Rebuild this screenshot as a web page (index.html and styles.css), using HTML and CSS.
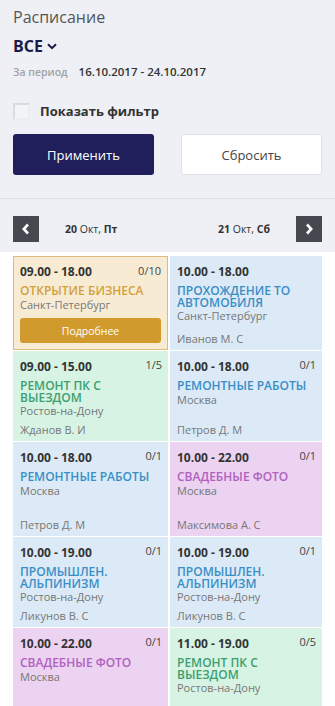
FILE: index.html
```html
<!DOCTYPE html>
<html lang="ru">
<head>
<meta charset="utf-8">
<link rel="stylesheet" href="styles.css">
</head>
<body>
<div class="top">
  <div class="title">Расписание</div>
  <div class="sel">ВСЕ
    <svg class="chev" width="10" height="7" viewBox="0 0 10 7"><path d="M1 1.2 L5 5.2 L9 1.2" fill="none" stroke="#1b1b4b" stroke-width="2"/></svg>
  </div>
  <div class="period"><span class="plabel">За период</span><span class="pval">16.10.2017 - 24.10.2017</span></div>
  <div class="check"><span class="box"></span><span class="clabel">Показать фильтр</span></div>
  <div class="btns">
    <button class="btn apply">Применить</button>
    <button class="btn reset">Сбросить</button>
  </div>
</div>
<div class="nav">
  <span class="arr"><svg width="10" height="12" viewBox="0 0 10 12"><path d="M7 1.5 L2.8 6 L7 10.5" fill="none" stroke="#fff" stroke-width="2.6"/></svg></span>
  <span class="day"><b>20</b> Окт, <b>Пт</b></span>
  <span class="day d2"><b>21</b> Окт, <b>Сб</b></span>
  <span class="arr"><svg width="10" height="12" viewBox="0 0 10 12"><path d="M3 1.5 L7.2 6 L3 10.5" fill="none" stroke="#fff" stroke-width="2.6"/></svg></span>
</div>
<div class="grid">
  <div class="card gold">
    <div class="time">09.00 - 18.00</div><span class="cnt">0/10</span>
    <div class="ttl">Открытие бизнеса</div>
    <div class="city">Санкт-Петербург</div>
    <div class="more">Подробнее</div>
  </div>
  <div class="card blue">
    <div class="time">10.00 - 18.00</div>
    <div class="ttl">Прохождение ТО автомобиля</div>
    <div class="city">Санкт-Петербург</div>
    <div class="who">Иванов М. С</div>
  </div>
  <div class="card green">
    <div class="time">09.00 - 15.00</div><span class="cnt">1/5</span>
    <div class="ttl">Ремонт ПК с<br>выездом</div>
    <div class="city">Ростов-на-Дону</div>
    <div class="who">Жданов В. И</div>
  </div>
  <div class="card blue">
    <div class="time">10.00 - 18.00</div><span class="cnt">0/1</span>
    <div class="ttl">Ремонтные работы</div>
    <div class="city">Москва</div>
    <div class="who">Петров Д. М</div>
  </div>
  <div class="card blue">
    <div class="time">10.00 - 18.00</div><span class="cnt">0/1</span>
    <div class="ttl">Ремонтные работы</div>
    <div class="city">Москва</div>
    <div class="who">Петров Д. М</div>
  </div>
  <div class="card pink">
    <div class="time">10.00 - 22.00</div><span class="cnt">0/1</span>
    <div class="ttl">Свадебные фото</div>
    <div class="city">Москва</div>
    <div class="who">Максимова А. С</div>
  </div>
  <div class="card blue">
    <div class="time">10.00 - 19.00</div><span class="cnt">0/1</span>
    <div class="ttl">Промышлен.<br>альпинизм</div>
    <div class="city">Ростов-на-Дону</div>
    <div class="who">Ликунов В. С</div>
  </div>
  <div class="card blue">
    <div class="time">10.00 - 19.00</div><span class="cnt">0/1</span>
    <div class="ttl">Промышлен.<br>альпинизм</div>
    <div class="city">Ростов-на-Дону</div>
    <div class="who">Ликунов В. С</div>
  </div>
  <div class="card pink">
    <div class="time">10.00 - 22.00</div><span class="cnt">0/1</span>
    <div class="ttl">Свадебные фото</div>
    <div class="city">Москва</div>
  </div>
  <div class="card green">
    <div class="time">11.00 - 19.00</div><span class="cnt">0/5</span>
    <div class="ttl">Ремонт ПК с<br>выездом</div>
    <div class="city">Ростов-на-Дону</div>
  </div>
</div>
</body>
</html>
```
FILE: styles.css
```css
* { box-sizing: border-box; }
html, body { margin: 0; padding: 0; }
body {
  background: #eef0f5;
  font-family: "Open Sans", "Noto Sans", sans-serif;
  color: #333;
  width: 335px;
  overflow: hidden;
}
.top {
  padding: 6px 13px 23px;
  border-bottom: 1px solid #dcdfe6;
}
.title {
  font-size: 16px;
  color: #555;
  line-height: 22px;
}
.sel {
  margin-top: 8px;
  font-size: 16px;
  font-weight: 700;
  color: #1b1b4b;
  line-height: 20px;
  display: flex;
  align-items: center;
  gap: 4px;
}
.chev { margin-top: 1px; }
.period {
  margin-top: 8px;
  line-height: 16px;
  display: flex;
  align-items: baseline;
  gap: 11px;
}
.plabel { font-size: 10.5px; color: #a0a3a8; font-weight: 600; }
.pval { font-size: 11.5px; color: #333; font-weight: 600; }
.check {
  margin-top: 22px;
  display: flex;
  align-items: center;
  gap: 10px;
}
.box {
  width: 17px; height: 17px;
  border: 2px solid #d9dbe0;
  border-right-color: #eceef2;
  border-bottom-color: #eceef2;
  background: #f3f4f7;
}
.clabel { font-size: 13px; font-weight: 700; color: #333; }
.btns {
  margin-top: 14px;
  display: flex;
  justify-content: space-between;
}
.btn {
  width: 141px;
  height: 41px;
  border-radius: 3px;
  font-family: inherit;
  font-size: 13px;
  padding: 0;
}
.apply { background: #201f5c; color: #fff; border: none; }
.reset { background: #fff; color: #444; border: 1px solid #dfe1e6; }
.nav {
  display: flex;
  align-items: center;
  padding: 17px 13px 10px;
}
.arr {
  width: 26px; height: 26px;
  background: #45484e;
  display: flex;
  align-items: center;
  justify-content: center;
}
.day {
  font-size: 10.5px;
  color: #333;
  margin-left: 26px;
}
.day b { font-weight: 700; }
.d2 { margin-left: auto; margin-right: 26px; }
.grid {
  background: #fff;
  padding: 4px 13px 0;
  display: grid;
  grid-template-columns: 155px 152px;
  grid-template-rows: 94px 90px 94px 90px 91px;
  column-gap: 2px;
  row-gap: 1px;
}
.card {
  position: relative;
  display: flex;
  flex-direction: column;
  padding: 8px 7px 4px;
}
.time { font-size: 12px; font-weight: 700; color: #333; line-height: 16px; }
.cnt {
  position: absolute;
  top: 6px; right: 6px;
  font-size: 11px;
  color: #444;
}
.ttl {
  margin-top: 5px;
  font-size: 12px;
  font-weight: 600;
  text-transform: uppercase;
  line-height: 11.5px;
}
.city { font-size: 11px; color: #777; line-height: 13px; margin-top: 1px; }
.who { margin-top: auto; font-size: 11px; color: #777; line-height: 14px; }
.gold { background: #f8ebd4; border: 1px solid #dcbb7c; padding: 7px 6px 6px; }
.gold .ttl { color: #d3a03b; }
.more {
  margin-top: auto;
  height: 25px;
  background: #d19a2d;
  color: #fff;
  font-size: 10.5px;
  border-radius: 3px;
  display: flex;
  align-items: center;
  justify-content: center;
}
.blue { background: #dbeaf6; }
.blue .ttl { color: #3a8ec6; }
.green { background: #d6f3e4; }
.green .ttl { color: #3e9f6f; }
.pink { background: #ecd3f1; }
.pink .ttl { color: #b161c0; }
```
